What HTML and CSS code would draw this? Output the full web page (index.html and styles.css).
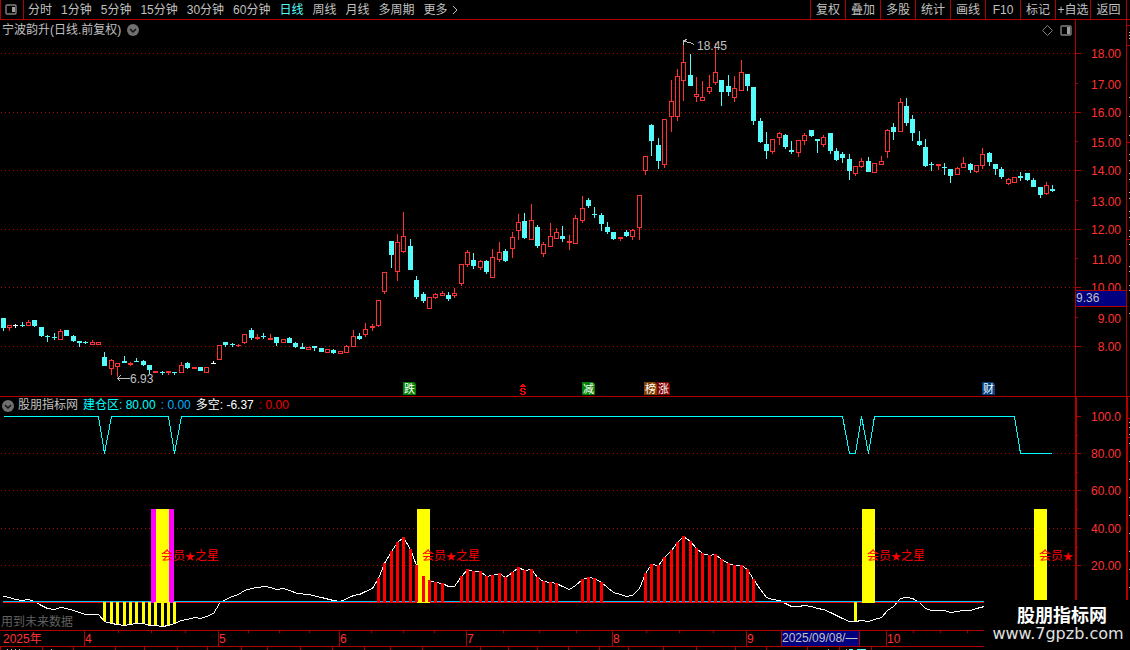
FILE: index.html
```html
<!DOCTYPE html>
<html lang="zh-CN">
<head>
  <meta charset="UTF-8">
  <meta name="viewport" content="width=device-width, initial-scale=1">
  <title>宁波韵升 日线</title>
  <link rel="stylesheet" href="styles.css">
</head>

<body>

  <header class="toolbar">
    <button class="layout-btn" aria-label="布局">
      <svg width="12" height="11" viewBox="0 0 12 11">
        <rect x="1" y="1" width="10" height="9" rx="1" fill="none" stroke="#808080" stroke-width="1.4"/>
        <rect x="7" y="3" width="3" height="5" fill="#a0a0a0"/>
      </svg>
    </button>
    <nav class="periods">
      <button>分时</button>
      <button>1分钟</button>
      <button>5分钟</button>
      <button>15分钟</button>
      <button>30分钟</button>
      <button>60分钟</button>
      <button class="active">日线</button>
      <button>周线</button>
      <button>月线</button>
      <button>多周期</button>
      <button class="more">更多
        <svg width="6" height="10" viewBox="0 0 6 10"><path d="M1 1l4 4-4 4" fill="none" stroke="#c0c0c0"/></svg>
      </button>
    </nav>
    <div class="tools">
      <button>复权</button>
      <button>叠加</button>
      <button>多股</button>
      <button>统计</button>
      <button>画线</button>
      <button>F10</button>
      <button>标记</button>
      <button>+自选</button>
      <button>返回</button>
    </div>
  </header>

  <main>
    <section class="pane">
      <svg class="chart" id="price" viewBox="0 20 1130 376"></svg>
      <div class="pane-head pane-title">
        <span>宁波韵升(日线.前复权)</span>
        <button class="round" aria-label="展开">
          <svg width="12" height="12" viewBox="0 0 12 12"><circle cx="6" cy="6" r="6" fill="#707070"/><path d="M3 5l3 3 3-3" fill="none" stroke="#111" stroke-width="1.5"/></svg>
        </button>
        <div class="pane-icons">
          <button aria-label="标注">
            <svg width="11" height="11" viewBox="0 0 11 11"><path d="M5.5 .5l5 5-5 5-5-5z" fill="none" stroke="#808080"/></svg>
          </button>
          <button aria-label="侧栏">
            <svg width="12" height="11" viewBox="0 0 12 11">
              <rect x="1" y="1" width="10" height="9" rx="1" fill="none" stroke="#808080" stroke-width="1.4"/>
              <rect x="7" y="2" width="3" height="7" fill="#a0a0a0"/>
            </svg>
          </button>
        </div>
      </div>
    </section>

    <section class="pane pane-indicator">
      <svg class="chart" id="indicator" viewBox="0 397 1130 233"></svg>
      <div class="pane-head">
        <button class="round" aria-label="指标">
          <svg width="12" height="12" viewBox="0 0 12 12"><circle cx="6" cy="6" r="6" fill="#707070"/><path d="M3 5l3 3 3-3" fill="none" stroke="#111" stroke-width="1.5"/></svg>
        </button>
        <span>股朋指标网</span>
        <span class="cyan">建仓区: 80.00</span>
        <span class="blue">: 0.00</span>
        <span class="white">多空: -6.37</span>
        <span class="red">: 0.00</span>
      </div>
      <p class="notice">用到未来数据</p>
    </section>

    <svg class="chart" id="timeline" viewBox="0 630 1130 20"></svg>
  </main>

  <div class="watermark">
    <strong>股朋指标网</strong>
    <span>www.7gpzb.com</span>
  </div>

  <script src="chart.js"></script>
</body>
</html>
```
FILE: styles.css
```css
* {
  box-sizing: border-box;
}

body {
  margin: 0;
  position: relative;
  background: #000;
  color: #c0c0c0;
  font: 12px/18px "Liberation Sans", "Noto Sans CJK SC", sans-serif;
}

button {
  padding: 0;
  border: 0;
  background: none;
  color: inherit;
  font: inherit;
  white-space: nowrap;
  cursor: pointer;
}

svg {
  display: block;
}

/* top bar */
.toolbar {
  display: flex;
  height: 20px;
  padding-right: 3px;
  border-bottom: 1px solid #b00000;
}

.layout-btn {
  display: flex;
  align-items: center;
  justify-content: center;
  width: 24px;
  padding-right: 2px;
  border: solid #b00000;
  border-width: 0 1px;
}

.periods {
  display: flex;
  flex: 1;
  gap: 9px;
  padding-left: 4px;
}

.periods .active {
  color: #54fcfc;
}

.more {
  display: flex;
  align-items: center;
  gap: 4px;
}

.tools {
  display: flex;
  border-right: 1px solid #b00000;
}

.tools button {
  width: 35px;
  border-left: 1px solid #b00000;
}

.tools button:last-child {
  width: 36px;
}

/* chart panes, the head row shares the grid cell with the chart */
.pane {
  display: grid;
}

.pane > * {
  grid-area: 1 / 1;
}

.pane-indicator {
  border-top: 1px solid #b00000;
}

.chart {
  width: 100%;
  height: auto;
  font-size: 12px;
}

.chart rect,
.chart polyline {
  shape-rendering: crispEdges;
}

.pane-head {
  display: flex;
  align-self: start;
  align-items: center;
  gap: 5px;
  padding: 0 58px 0 2px;
  line-height: 17px;
}

.pane-title {
  gap: 6px;
  line-height: 20px;
}

.pane-indicator .round {
  width: 11px;
}

.pane-icons {
  display: flex;
  gap: 7px;
  margin-left: auto;
}

.cyan { color: #00ffff; }
.blue { color: #00b0ff; }
.white { color: #fff; }
.red { color: #f00000; }

.notice {
  align-self: end;
  margin: 0;
  padding-left: 1px;
  line-height: 16px;
  color: #606060;
}

.watermark {
  position: absolute;
  right: 0;
  bottom: 0;
  display: flex;
  flex-direction: column;
  align-items: center;
  width: 146px;
  height: 50px;
  padding: 4px 0 0 2px;
  background: #000;
  color: #e0e0e0;
  font: 16px/20px "DejaVu Sans", sans-serif;
}

.watermark strong {
  padding-left: 8px;
  color: #fff;
  font: bold 18px/20px "Noto Sans CJK SC", sans-serif;
}
```
FILE: chart.js
```js
const RED = '#ff3232';
const LINE = '#b00000';
const CYAN = '#54fcfc';

// x, high, body top, body bottom, low, type (u = up, d = down, f = flat up, w = unchanged)
const candles = [
  [3,318,318,328,331,'d'], [9,325,325,328,331,'u'], [15,324,325,326,328,'w'], [22,322,325,326,327,'d'],
  [28,320,322,326,326,'u'], [34,320,320,326,327,'d'], [41,327,327,336,337,'d'], [47,335,336,337,342,'d'],
  [54,333,337,338,340,'d'], [60,329,331,340,340,'u'], [66,330,330,336,336,'d'], [73,335,336,341,342,'d'],
  [79,341,341,343,347,'d'], [85,341,342,343,344,'d'], [92,340,342,345,345,'u'], [98,342,342,345,345,'u'],
  [104,352,357,366,366,'d'], [111,359,360,369,375,'u'], [117,363,363,367,377,'u'], [124,356,361,363,363,'d'],
  [130,362,363,365,366,'f'], [136,358,361,362,362,'d'], [143,360,361,365,366,'d'], [149,365,365,370,374,'d'],
  [155,371,371,373,373,'f'], [162,371,372,373,375,'d'], [168,371,371,373,375,'f'], [174,372,372,373,375,'d'],
  [181,362,365,373,373,'u'], [187,362,363,368,369,'d'], [194,367,367,369,369,'f'], [200,367,367,371,371,'d'],
  [206,367,367,373,373,'u'], [213,361,363,364,364,'w'], [219,345,345,360,360,'u'], [225,342,342,345,347,'d'],
  [232,343,344,345,347,'d'], [238,344,345,346,347,'f'], [244,334,334,343,344,'u'], [251,328,330,338,340,'d'],
  [257,334,337,339,340,'f'], [263,333,336,337,339,'d'], [270,334,338,340,340,'f'], [276,337,337,343,346,'d'],
  [283,339,339,343,343,'u'], [289,337,338,343,343,'d'], [295,342,343,347,348,'d'], [302,343,347,349,349,'d'],
  [308,347,347,350,350,'u'], [314,346,346,348,351,'d'], [321,348,348,352,352,'d'], [327,349,349,353,353,'u'],
  [333,349,350,353,354,'d'], [340,351,351,354,354,'u'], [346,345,346,353,353,'u'], [353,330,336,347,347,'u'],
  [359,333,336,339,340,'d'], [365,323,329,335,337,'u'], [372,324,326,328,331,'f'], [378,300,300,326,327,'u'],
  [384,272,272,292,294,'u'], [391,241,241,255,268,'d'], [397,234,242,272,281,'u'], [403,212,236,252,253,'u'],
  [410,239,246,270,270,'d'], [416,276,280,297,299,'d'], [423,292,294,301,303,'d'], [429,297,297,309,309,'u'],
  [435,293,294,298,299,'u'], [442,291,293,296,296,'u'], [448,292,295,299,301,'d'], [454,288,293,296,298,'u'],
  [461,264,264,284,286,'u'], [467,250,252,265,267,'u'], [473,253,260,266,269,'d'], [480,260,261,268,270,'u'],
  [486,260,261,272,274,'d'], [492,249,257,278,278,'u'], [499,242,252,260,262,'u'], [505,249,251,261,262,'d'],
  [512,232,237,249,258,'u'], [518,214,222,231,240,'u'], [524,213,221,238,239,'d'], [531,204,220,240,240,'u'],
  [537,225,227,246,248,'d'], [543,242,244,254,257,'u'], [550,223,236,247,247,'u'], [556,228,232,239,239,'u'],
  [562,226,236,239,242,'d'], [569,235,241,243,250,'f'], [575,215,218,244,244,'u'], [582,196,208,221,223,'u'],
  [588,198,200,206,208,'d'], [594,207,214,215,218,'d'], [601,213,215,224,231,'d'], [607,222,227,232,234,'d'],
  [613,232,232,239,240,'d'], [620,237,237,239,241,'f'], [626,230,232,236,237,'d'], [632,229,230,237,240,'u'],
  [639,195,195,228,240,'u'], [645,156,156,171,175,'u'], [651,124,125,141,156,'d'], [658,138,145,161,169,'d'],
  [664,119,119,165,168,'u'], [671,80,101,117,132,'u'], [677,69,76,117,121,'u'], [683,40,62,81,101,'u'],
  [690,54,75,86,86,'d'], [696,77,94,97,102,'u'], [702,81,97,101,101,'u'], [709,75,87,92,94,'u'],
  [715,43,72,83,85,'u'], [721,80,80,92,106,'d'], [728,75,86,92,96,'d'], [734,76,88,98,102,'u'],
  [741,60,72,91,91,'u'], [747,74,74,86,91,'d'], [753,87,87,121,125,'d'], [760,118,121,142,143,'d'],
  [766,132,144,151,159,'d'], [772,139,139,152,154,'u'], [779,132,133,138,145,'u'], [785,134,135,147,149,'d'],
  [791,141,150,152,154,'d'], [798,140,140,153,157,'u'], [804,133,135,141,145,'u'], [811,130,130,136,137,'d'],
  [817,139,139,141,153,'d'], [823,135,137,145,147,'u'], [830,133,133,151,154,'d'], [836,148,151,160,161,'d'],
  [842,152,154,158,163,'d'], [849,154,159,171,180,'d'], [855,166,166,174,176,'u'], [861,158,161,167,168,'u'],
  [868,157,161,172,172,'d'], [874,163,163,173,173,'u'], [881,156,161,165,165,'u'], [887,129,130,152,158,'u'],
  [893,123,127,132,140,'d'], [900,98,102,132,132,'u'], [906,98,106,123,126,'d'], [912,115,119,133,141,'d'],
  [919,131,141,145,146,'d'], [925,139,147,166,167,'d'], [931,162,164,165,171,'d'], [938,164,164,166,170,'f'],
  [944,163,167,168,175,'d'], [950,169,169,176,183,'d'], [957,167,168,175,175,'u'], [963,157,163,168,168,'u'],
  [970,163,164,170,173,'d'], [976,165,165,172,173,'u'], [982,148,154,166,169,'u'], [989,152,153,162,166,'d'],
  [995,164,164,169,175,'d'], [1001,167,169,177,179,'d'], [1008,178,179,184,185,'u'], [1014,177,177,183,183,'u'],
  [1020,172,176,178,181,'d'], [1027,173,173,180,181,'d'], [1033,178,180,187,187,'d'], [1040,187,187,195,198,'d'],
  [1046,182,185,194,195,'u'], [1052,185,189,191,192,'d']
];

// 多空 curve
const trend = [
  [3,596], [9,597], [15,599], [22,600], [28,599], [34,601], [41,605], [47,608], [54,609], [60,607], [66,608],
  [73,610], [79,612], [85,614], [98,614], [104,621], [111,623], [117,624], [124,625], [130,624], [136,623],
  [143,623], [149,625], [155,625], [162,626], [168,625], [174,623], [181,620], [187,619], [194,617], [200,618],
  [206,616], [213,613], [219,603], [225,599], [232,596], [238,594], [244,590], [251,588], [257,587], [264,586],
  [270,587], [276,589], [283,588], [289,590], [297,593], [308,594], [321,597], [333,600], [340,601], [353,595],
  [359,594], [365,591], [372,588], [378,578], [384,563], [391,551], [397,542], [403,537], [410,549], [416,565],
  [423,576], [429,580], [435,582], [442,583], [448,586], [454,586], [461,576], [467,569], [473,571], [480,571],
  [486,576], [492,575], [499,573], [505,577], [512,572], [518,567], [524,570], [531,569], [537,577], [543,581],
  [550,582], [556,583], [562,586], [569,589], [575,585], [582,579], [588,577], [594,578], [601,582], [607,587],
  [613,592], [620,594], [626,596], [632,595], [639,588], [645,573], [651,564], [658,565], [664,557], [671,550],
  [677,542], [683,536], [690,541], [696,548], [702,553], [709,555], [715,554], [721,559], [728,563], [734,565],
  [741,565], [747,569], [753,579], [760,589], [766,597], [772,599], [779,600], [785,603], [791,606], [798,606],
  [804,605], [811,606], [817,608], [823,609], [830,612], [836,615], [842,618], [849,621], [855,621], [861,620],
  [868,621], [874,619], [881,617], [887,610], [893,606], [900,598], [906,597], [912,598], [919,602], [925,608],
  [931,610], [944,610], [950,612], [957,611], [963,610], [970,610], [976,608], [984,606]
];

const zone = '3,416 98,416 104,453 111,416 168,416 174,453 181,416 842,416 849,453 855,453 ' +
  '861,416 868,453 874,416 1014,416 1020,453 1051,453';

function rect(x, y, w, h, fill) {
  return `<rect x="${x}" y="${y}" width="${w}" height="${h}" fill="${fill}"/>`;
}

function text(x, y, str, fill, anchor = 'start') {
  return `<text x="${x}" y="${y}" fill="${fill}" text-anchor="${anchor}">${str}</text>`;
}

function line(points, color) {
  return `<polyline transform="translate(.5 .5)" points="${points}" fill="none" stroke="${color}"/>`;
}

function dots(id) {
  return `<defs><pattern id="${id}" width="4" height="650" patternUnits="userSpaceOnUse">
    ${rect(1, 0, 1, 650, LINE)}</pattern></defs>`;
}

function candle([x, high, top, bottom, low, type]) {
  const color = { u: RED, f: RED, d: CYAN, w: '#fff' }[type];
  let out = rect(x, high, 1, low - high, color) + rect(x - 2, top, 5, bottom - top, color);
  if (type === 'u') out += rect(x - 1, top + 1, 3, bottom - top - 2, '#000');
  return out;
}

function badge(x, str, fill) {
  return `<path d="M${x} 382h11l2 2v11h-13z" fill="${fill}"/>
    <text x="${x + 1}" y="393" font-size="11" fill="#fff">${str}</text>`;
}

// small arrow over an S
function dividend() {
  const rows = [
    [522, 384, 2], [521, 385, 4], [520, 386, 6], [521, 388, 4], [520, 389, 2], [524, 389, 2],
    [520, 390, 2], [521, 391, 4], [524, 392, 2], [520, 393, 2], [524, 393, 2], [521, 394, 4]
  ];
  return rows.map(([x, y, w]) => rect(x, y, w, 1, '#ff0000')).join('');
}

function drawPrice() {
  let out = dots('dots-price');
  for (const y of [53, 112, 170, 229, 287, 346]) {
    out += rect(0, y, 1075, 1, 'url(#dots-price)') + rect(1076, y, 5, 1, LINE);
  }
  for (const y of [83, 141, 200, 258, 317]) out += rect(1076, y, 2, 1, LINE);
  out += rect(1075, 20, 1, 376, LINE) + rect(1126, 20, 1, 376, LINE);

  const centers = [54, 85, 113, 143, 171, 202, 230, 260, 288, 319, 347];
  centers.forEach((y, i) => { out += text(1121, y + 4, (18 - i).toFixed(2), RED, 'end'); });

  out += candles.map(candle).join('');

  // cursor price
  out += rect(1075, 290, 52, 17, LINE) + rect(1076, 291, 50, 15, '#000080') + text(1076, 302, '9.36', '#c0c0c0');

  // highest and lowest
  out += line('683,44 683,40 687,39', '#c0c0c0') + line('684,41 689,42 694,44', '#c0c0c0') + text(697, 50, '18.45', '#c0c0c0');
  out += line('117,378 129,378', '#c0c0c0') + line('120,375 117,378 120,381', '#c0c0c0') + text(130, 383, '6.93', '#c0c0c0');

  out += badge(403, '跌', '#008000') + badge(582, '减', '#008000') + badge(644, '榜', '#804000');
  out += badge(657, '涨', '#800000') + badge(982, '财', '#004080');
  out += dividend();

  // edge of the side panel
  for (const y of [25, 45, 142, 239]) out += rect(1127, y, 3, 1, LINE);
  for (const y of [32, 35, 38, 97, 116, 135, 154, 160, 173, 179, 192, 198, 211, 217, 230, 236, 244, 266, 271, 285, 290, 313]) {
    out += rect(1129, y, 1, 1, '#c0c0c0');
  }
  document.getElementById('price').innerHTML = out;
}

function drawIndicator() {
  let out = dots('dots-ind');
  const labels = ['100.0', '80.00', '60.00', '40.00', '20.00'];
  [416, 453, 490, 528, 565].forEach((y, i) => {
    if (i) out += rect(0, y, 1075, 1, 'url(#dots-ind)');
    out += rect(1077, y, 4, 1, LINE) + text(1121, y + 5, labels[i], RED, 'end');
  });
  for (const y of [435, 472, 509, 547]) out += rect(1077, y, 1, 1, LINE);
  out += rect(1075, 397, 2, 233, LINE) + rect(1126, 397, 2, 233, LINE);

  out += line(zone, '#00ffff') + line(trend.map(p => p.join()).join(' '), '#fff');
  out += rect(3, 601, 982, 1, '#00c0ff') + rect(3, 602, 982, 1, '#f00000');
  out += rect(151, 509, 23, 94, '#ff00ff');
  for (const x of [156, 417, 862, 1034]) out += rect(x, 509, 13, 94, '#ffff00');

  const long = [[378, 442], [461, 556], [582, 601], [645, 753]];
  const short = [[104, 174], [855, 855]];
  const within = (x, ranges) => ranges.some(([a, b]) => x >= a && x <= b);
  for (const [x, y] of trend) {
    if (within(x, long)) out += rect(x - 1, y, 3, 602 - y, '#ff0000');
    if (within(x, short)) out += rect(x - 1, 602, 3, y - 602, '#ffff00');
  }

  const star = '<tspan font-size="10">★</tspan>';
  for (const x of [161, 422, 867]) out += text(x, 560, `会员${star}之星`, '#ff0000');
  out += text(1039, 560, `会员${star}`, '#ff0000');

  for (const y of [418, 437]) out += rect(1128, y, 2, 1, LINE);
  for (const y of [422, 427, 434, 443, 461, 479, 497, 515, 533, 551, 569, 587]) out += rect(1129, y, 1, 1, '#c0c0c0');
  document.getElementById('indicator').innerHTML = out;
}

function drawTimeline() {
  let out = rect(0, 630, 1130, 1, LINE) + rect(0, 646, 1130, 1, LINE);
  const months = [[84, 4], [218, 5], [339, 6], [466, 7], [612, 8], [746, 9], [886, 10]];
  out += text(3, 643, '2025年', RED);
  for (const [x, m] of months) out += rect(x, 631, 1, 15, LINE) + text(x + 1, 643, m, RED);
  for (const x of [118, 151, 185, 248, 279, 309, 371, 403, 434, 503, 539, 576, 646, 679, 713, 913, 940, 967]) {
    out += rect(x, 631, 1, 2, LINE);
  }
  for (const x of [0, 42, 73, 115, 144, 177, 207, 241, 267, 300, 332, 364, 390, 422, 480, 508, 537, 568, 599, 628, 663, 696, 735, 766, 807, 839, 871]) {
    out += rect(x, 647, 1, 3, LINE);
  }
  out += rect(781, 631, 79, 15, LINE) + rect(782, 631, 77, 15, '#000080') + text(782, 642, '2025/09/08/—', '#c0c0c0');
  for (const x of [7, 11, 15, 19, 51, 828, 846]) out += rect(x, 649, 1, 1, '#c0c0c0');
  out += rect(849, 649, 4, 1, CYAN) + rect(857, 649, 9, 1, CYAN);
  document.getElementById('timeline').innerHTML = out;
}

drawPrice();
drawIndicator();
drawTimeline();
```
